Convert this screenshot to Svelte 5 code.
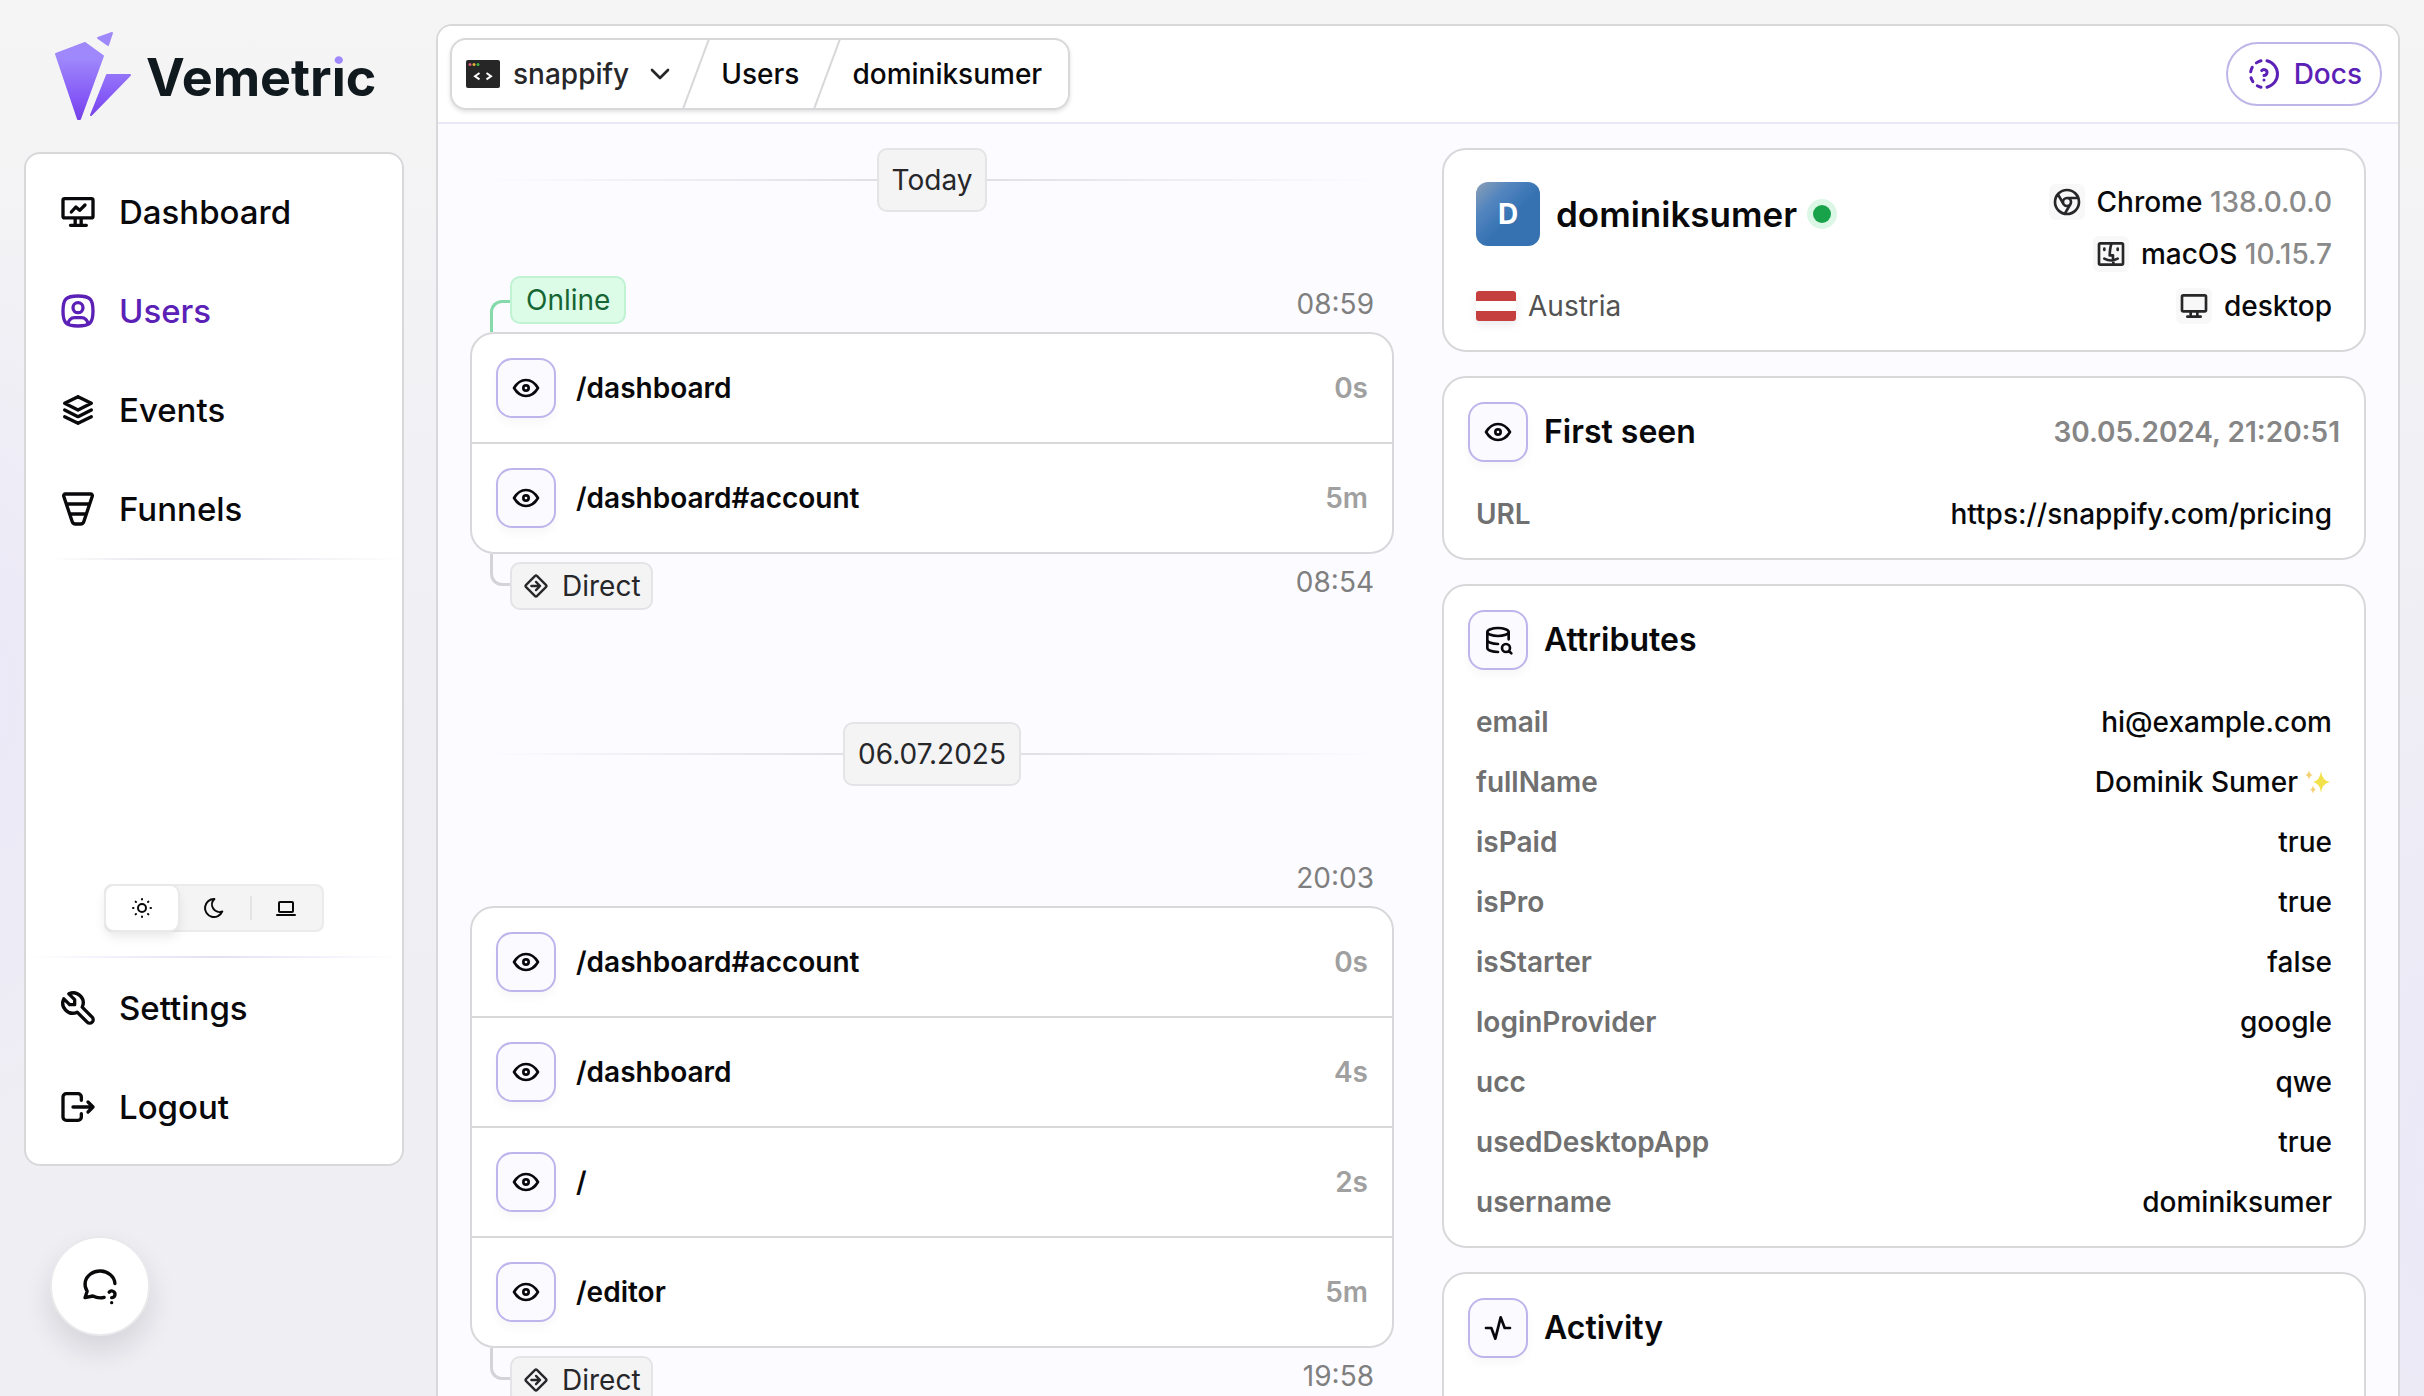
<script lang="ts">
  const icons: Record<string, string> = {
    dashboard:
      'M3 5a1 1 0 0 1 1-1h16a1 1 0 0 1 1 1v9.500a1 1 0 0 1-1 1h-16a1 1 0 0 1-1-1zM7.500 20h9.500M10.300 15.500v4.500M13.900 15.500v4.500M8 12l2.700-3 2.300 2 3.200-3.200',
    users:
      'M9 10a3 3 0 1 0 6 0a3 3 0 1 0-6 0M6 20.050v-.050a4 4 0 0 1 4-4h4a4 4 0 0 1 4 4v.050M12 3c7.200 0 9 1.800 9 9s-1.800 9-9 9s-9-1.800-9-9s1.800-9 9-9',
    events: 'M12 4l-8 4l8 4l8-4l-8-4M4 12l8 4l8-4M4 16l8 4l8-4',
    funnels:
      'M4.387 3h15.226a1 1 0 0 1 .948 1.316l-5.105 15.316a2 2 0 0 1-1.898 1.368h-3.116a2 2 0 0 1-1.898-1.368l-5.104-15.316a1 1 0 0 1 .947-1.316M5 9h14M7 15h10',
    settings: 'M7 10h3v-3l-3.500-3.500a6 6 0 0 1 8 8l6 6a2 2 0 0 1-3 3l-6-6a6 6 0 0 1-8-8l3.500 3.500',
    logout:
      'M14 8v-2a2 2 0 0 0-2-2h-7a2 2 0 0 0-2 2v12a2 2 0 0 0 2 2h7a2 2 0 0 0 2-2v-2M9 12h12l-3-3M18 15l3-3',
    sun: 'M8 12a4 4 0 1 0 8 0a4 4 0 1 0-8 0M3 12h.500M12 3v.500M20.500 12h.500M12 20.500v.500M5.600 5.600l.400.400M18.400 5.600l-.400.400M18 18l.400.400M6 18l-.400.400',
    moon: 'M12 3c.132 0 .263 0 .393 0a7.500 7.500 0 0 0 7.920 12.446a9 9 0 1 1-8.313-12.454z',
    laptop: 'M3 19h18M5 7a1 1 0 0 1 1-1h12a1 1 0 0 1 1 1v8a1 1 0 0 1-1 1h-12a1 1 0 0 1-1-1z',
    eye: 'M10 12a2 2 0 1 0 4 0a2 2 0 0 0-4 0M21 12c-2.400 4-5.400 6-9 6s-6.600-2-9-6c2.400-4 5.400-6 9-6s6.600 2 9 6',
    attributes:
      'M4 6c0 1.657 3.582 3 8 3s8-1.343 8-3s-3.582-3-8-3s-8 1.343-8 3M4 6v6c0 1.657 3.582 3 8 3M20 11.500v-5.500M4 12v6c0 1.657 3.582 3 8 3M15 18a3 3 0 1 0 6 0a3 3 0 1 0-6 0M20.200 20.200l1.800 1.800',
    activity: 'M3 12h4l3 8l4-16l3 8h4',
    direct:
      'M3.320 12.774l7.906 7.905c.427.428 1.120.428 1.548 0l7.905-7.905a1.095 1.095 0 0 0 0-1.548l-7.905-7.905a1.095 1.095 0 0 0-1.548 0l-7.905 7.905a1.095 1.095 0 0 0 0 1.548zM8 12h7.500M12 8.500l3.500 3.500l-3.500 3.500',
    docs: 'M12 16v.010M12 13a2 2 0 0 0 .914-3.782a1.980 1.980 0 0 0-2.414.483M10 20.777a8.942 8.942 0 0 1-2.480-.969M14 3.223a9.003 9.003 0 0 1 0 17.554M4.579 17.093a8.961 8.961 0 0 1-1.227-2.592M3.124 10.500c.160-.950.468-1.850.900-2.675l.169-.305M6.907 4.579a8.954 8.954 0 0 1 3.093-1.356',
    chrome:
      'M3 12a9 9 0 1 0 18 0a9 9 0 1 0-18 0M9 12a3 3 0 1 0 6 0a3 3 0 1 0-6 0M12 9h8.400M14.598 13.500l-4.200 7.275M9.402 13.500l-4.200-7.275',
    finder:
      'M3 5a1 1 0 0 1 1-1h16a1 1 0 0 1 1 1v14a1 1 0 0 1-1 1h-16a1 1 0 0 1-1-1zM7 8v1M17 8v1M12.500 4c-.654 1.486-1.260 3.443-1.500 9h2.500c-.190 2.867.094 5.024.500 7M7 15.500c3.667 2 6.333 2 10 0',
    desktop:
      'M3 5a1 1 0 0 1 1-1h16a1 1 0 0 1 1 1v10a1 1 0 0 1-1 1h-16a1 1 0 0 1-1-1zM7 20h10M9.500 16v4M14.500 16v4',
    help: 'M14.500 18.883a9.700 9.700 0 0 1-6.800-.883l-4.700 1l1.300-3.900c-2.324-3.437-1.426-7.872 2.100-10.374c3.526-2.501 8.590-2.296 11.845.480c1.700 1.450 2.600 3.350 2.700 5.300M19 22v.010M19 19a2.003 2.003 0 0 0 .914-3.782a1.980 1.980 0 0 0-2.414.483',
    chevron: 'M6 9l6 6l6-6'
  };

  const mainNav = [
    { label: 'Dashboard', icon: 'dashboard', active: false },
    { label: 'Users', icon: 'users', active: true },
    { label: 'Events', icon: 'events', active: false },
    { label: 'Funnels', icon: 'funnels', active: false }
  ];

  let theme = $state('Light');
  const themes = [
    { name: 'Light', icon: 'sun' },
    { name: 'Dark', icon: 'moon' },
    { name: 'System', icon: 'laptop' }
  ];

  const days = [
    {
      label: 'Today',
      online: true,
      end: '08:59',
      start: '08:54',
      events: [
        ['/dashboard', '0s'],
        ['/dashboard#account', '5m']
      ]
    },
    {
      label: '06.07.2025',
      online: false,
      end: '20:03',
      start: '19:58',
      events: [
        ['/dashboard#account', '0s'],
        ['/dashboard', '4s'],
        ['/', '2s'],
        ['/editor', '5m']
      ]
    }
  ];

  const devices = [
    { icon: 'chrome', name: 'Chrome', version: '138.0.0.0' },
    { icon: 'finder', name: 'macOS', version: '10.15.7' },
    { icon: 'desktop', name: 'desktop', version: '' }
  ];

  const attributes = [
    ['email', 'hi@example.com'],
    ['fullName', 'Dominik Sumer'],
    ['isPaid', 'true'],
    ['isPro', 'true'],
    ['isStarter', 'false'],
    ['loginProvider', 'google'],
    ['ucc', 'qwe'],
    ['usedDesktopApp', 'true'],
    ['username', 'dominiksumer']
  ];
</script>

{#snippet icon(name: string, size: number)}
  <svg class="icon" width={size} height={size} viewBox="0 0 24 24" aria-hidden="true">
    <path d={icons[name]} />
  </svg>
{/snippet}

<div class="app">
  <aside class="sidebar">
    <a class="brand" href="#home" aria-label="Vemetric">
      <svg class="mark" width="78" height="90" viewBox="0 0 78 90" aria-hidden="true">
        <defs>
          <linearGradient id="mark-fill" gradientUnits="userSpaceOnUse" x1="0" y1="0" x2="0" y2="90">
            <stop offset="0.3" stop-color="#9f88fb" />
            <stop offset="0.75" stop-color="#8458f6" />
            <stop offset="1" stop-color="#7440e6" />
          </linearGradient>
        </defs>
        <g fill="url(#mark-fill)" stroke="url(#mark-fill)" stroke-width="2" stroke-linejoin="round">
          <path d="M2 23L31 12L49 25L26 88H24Z" />
          <path d="M44 7L58 2L54 14Z" />
          <path d="M53 44H76L37 84Z" />
        </g>
      </svg>
      <span class="wordmark">Vemetr<span class="dotted">i</span>c</span>
    </a>

    <nav class="side-card" aria-label="Main">
      {#each mainNav as item}
        <a class="nav-item" class:active={item.active} href="#{item.label.toLowerCase()}">
          {@render icon(item.icon, 40)}
          {item.label}
        </a>
      {/each}
      <div class="rule left"></div>
      <div class="spacer"></div>
      <div class="themes" role="group" aria-label="Theme">
        {#each themes as t}
          <button
            class="theme"
            class:selected={theme === t.name}
            aria-label={t.name}
            aria-pressed={theme === t.name}
            onclick={() => (theme = t.name)}
          >
            {@render icon(t.icon, 24)}
          </button>
        {/each}
      </div>
      <div class="rule"></div>
      <a class="nav-item" href="#settings">{@render icon('settings', 40)}Settings</a>
      <a class="nav-item" href="#logout">{@render icon('logout', 40)}Logout</a>
    </nav>
  </aside>

  <button class="help" aria-label="Help">{@render icon('help', 40)}</button>

  <main class="panel">
    <header class="topbar">
      <nav class="crumbs" aria-label="Breadcrumb">
        <button class="project">
          <svg width="34" height="28" viewBox="0 0 34 28" aria-hidden="true">
            <rect width="34" height="28" rx="2" fill="#262626" />
            <circle cx="4" cy="4.500" r="1.500" fill="#e0567a" />
            <circle cx="8" cy="4.500" r="1.500" fill="#e2b33c" />
            <circle cx="12" cy="4.500" r="1.500" fill="#3fae49" />
            <path
              d="M13.500 13l-4.500 3.200l4.500 3.200M20.500 13l4.500 3.200l-4.500 3.200"
              fill="none"
              stroke="#fff"
              stroke-width="2"
            />
          </svg>
          <span class="project-name">snappify</span>
          {@render icon('chevron', 32)}
        </button>
        <svg class="slash" width="28" height="68" viewBox="0 0 28 68" aria-hidden="true">
          <path d="M27 -1L1 69" />
        </svg>
        <a href="#users">Users</a>
        <svg class="slash" width="28" height="68" viewBox="0 0 28 68" aria-hidden="true">
          <path d="M27 -1L1 69" />
        </svg>
        <a class="current" href="#dominiksumer" aria-current="page">dominiksumer</a>
      </nav>
      <a class="docs" href="#docs">{@render icon('docs', 36)}Docs</a>
    </header>

    <div class="content">
      <section class="timeline" aria-label="Sessions">
        {#each days as day}
          <div class="day">
            <h2 class="day-label"><span>{day.label}</span></h2>
            <div class="session-head">
              {#if day.online}
                <span class="connector top"></span>
                <span class="badge online">Online</span>
              {/if}
              <time>{day.end}</time>
            </div>
            <ul class="events">
              {#each day.events as [path, duration]}
                <li>
                  <span class="icon-box">{@render icon('eye', 32)}</span>
                  <span class="path">{path}</span>
                  <span class="duration">{duration}</span>
                </li>
              {/each}
            </ul>
            <div class="session-foot">
              <span class="connector bottom"></span>
              <span class="badge">{@render icon('direct', 28)}Direct</span>
              <time>{day.start}</time>
            </div>
          </div>
        {/each}
      </section>

      <section class="details" aria-label="User details">
        <article class="card profile">
          <div class="identity">
            <div class="who">
              <span class="avatar">D</span>
              <h1>dominiksumer</h1>
              <span class="status" role="img" aria-label="Online now"></span>
            </div>
            <div class="country">
              <svg class="flag" width="40" height="30" viewBox="0 0 40 30" aria-hidden="true">
                <rect width="40" height="30" rx="3" fill="#c53f3f" />
                <rect y="10" width="40" height="10" fill="#fff" />
              </svg>
              Austria
            </div>
          </div>
          <ul class="devices">
            {#each devices as device}
              <li>
                <span class="device-icon">{@render icon(device.icon, 32)}</span>
                <span>{device.name} {#if device.version}<span class="version">{device.version}</span>{/if}</span>
              </li>
            {/each}
          </ul>
        </article>

        <article class="card">
          <div class="card-head">
            <span class="icon-box">{@render icon('eye', 32)}</span>
            <h2>First seen</h2>
            <time class="seen">30.05.2024, 21:20:51</time>
          </div>
          <dl>
            <div class="pair"><dt>URL</dt><dd class="url">https://snappify.com/pricing</dd></div>
          </dl>
        </article>

        <article class="card">
          <div class="card-head">
            <span class="icon-box">{@render icon('attributes', 32)}</span>
            <h2>Attributes</h2>
          </div>
          <dl>
            {#each attributes as [key, value]}
              <div class="pair">
                <dt>{key}</dt>
                <dd>
                  {value}
                  {#if key === 'fullName'}
                    <svg width="28" height="28" viewBox="0 0 28 28" role="img" aria-label="sparkles">
                      <path
                        d="M17 3Q18 12.500 26 14Q18 15.500 17 25Q16 15.500 9 14Q16 12.500 17 3Z"
                        fill="#f2e14b"
                      />
                      <path
                        d="M5 2Q5.500 6.500 9 7Q5.500 7.500 5 12Q4.500 7.500 1 7Q4.500 6.500 5 2ZM9 17Q9.500 21 12 21.500Q9.500 22 9 26Q8.500 22 6 21.500Q8.500 21 9 17Z"
                        fill="#f3cf72"
                      />
                    </svg>
                  {/if}
                </dd>
              </div>
            {/each}
          </dl>
        </article>

        <article class="card">
          <div class="card-head">
            <span class="icon-box">{@render icon('activity', 32)}</span>
            <h2>Activity</h2>
          </div>
          <div class="chart"></div>
        </article>
      </section>
    </div>
  </main>
</div>

<style>
  :global(body) {
    margin: 0;
  }

  .app {
    box-sizing: border-box;
    display: grid;
    grid-template-columns: 380px minmax(0, 1fr);
    column-gap: 32px;
    height: 100vh;
    padding: 24px 24px 0;
    overflow: hidden;
    font-family: Inter, 'Noto Sans', sans-serif;
    font-size: 28px;
    line-height: 40px;
    font-weight: 500;
    color: #09090b;
    background:
      radial-gradient(ellipse 120px 480px at 0 50%, rgba(232, 228, 250, 0.6), transparent),
      radial-gradient(ellipse 160px 620px at 100% 84%, rgba(232, 228, 250, 0.6), transparent),
      linear-gradient(#f5f5f5, #f0eff4 44%, #efeef3);
  }

  .app *,
  .app *::before {
    box-sizing: border-box;
  }

  a {
    color: inherit;
    text-decoration: none;
  }

  button {
    padding: 0;
    border: 0;
    font: inherit;
    color: inherit;
    background: none;
    cursor: pointer;
  }

  h1,
  h2,
  ul,
  dl,
  dd {
    margin: 0;
    padding: 0;
  }

  ul {
    list-style: none;
  }

  .icon {
    flex: none;
    display: block;
    fill: none;
    stroke: currentColor;
    stroke-width: 2;
    stroke-linecap: round;
    stroke-linejoin: round;
  }

  /* Sidebar */
  .sidebar {
    display: flex;
    flex-direction: column;
    min-height: 0;
    padding-bottom: 230px;
  }

  .brand {
    display: flex;
    align-items: center;
    gap: 14px;
    height: 104px;
    margin: 0 0 24px 30px;
  }

  .mark {
    flex: none;
  }

  .wordmark {
    padding-top: 4px;
    font-size: 52px;
    line-height: 64px;
    font-weight: 700;
    color: #10191d;
  }

  .dotted {
    color: transparent;
    background: linear-gradient(#9f88fb 22px, #10191d 22px);
    background-clip: text;
    -webkit-background-clip: text;
  }

  .side-card {
    flex: 1;
    display: flex;
    flex-direction: column;
    padding: 8px 0;
    border: 2px solid #d8d8db;
    border-radius: 16px;
    background: #fff;
  }

  .nav-item {
    flex: none;
    display: flex;
    align-items: center;
    gap: 21px;
    height: 99px;
    padding-left: 32px;
    font-size: 33px;
  }

  .nav-item.active {
    color: #5b21b6;
  }

  .rule {
    flex: none;
    height: 2px;
    background: linear-gradient(90deg, transparent, #e3e0f6 50%, transparent);
  }

  .rule.left {
    margin-left: 24px;
    background: linear-gradient(90deg, transparent, #ebeaf0 25%, #ebeaf0 60%, transparent);
  }

  .spacer {
    flex: 1;
  }

  .themes {
    display: flex;
    align-self: center;
    margin-bottom: 24px;
    border: 2px solid #ebebed;
    border-radius: 8px;
    background: #f4f4f5;
  }

  .theme {
    position: relative;
    display: grid;
    place-items: center;
    width: 72px;
    height: 44px;
    border-radius: 8px;
  }

  .theme:last-child::before {
    content: '';
    position: absolute;
    left: 0;
    top: 10px;
    bottom: 10px;
    width: 2px;
    background: #e4e4e7;
  }

  .theme.selected {
    background: #fff;
    box-shadow:
      0 0 0 2px #e9e9eb,
      0 6px 12px rgba(0, 0, 0, 0.1);
  }

  .help {
    position: fixed;
    left: 50px;
    bottom: 60px;
    display: grid;
    place-items: center;
    width: 100px;
    height: 100px;
    border: 2px solid #e9e9ec;
    border-radius: 50%;
    background: #fff;
    box-shadow: 0 14px 28px rgba(24, 24, 40, 0.12);
  }

  /* Main panel */
  .panel {
    display: flex;
    flex-direction: column;
    min-width: 0;
    min-height: 0;
    border: 2px solid #d8d8db;
    border-bottom: 0;
    border-radius: 16px 16px 0 0;
    background: #fcfbff;
    overflow: hidden;
  }

  .topbar {
    flex: none;
    display: flex;
    align-items: center;
    justify-content: space-between;
    padding: 12px 16px 12px 12px;
    border-bottom: 2px solid #e9e8f8;
    background: #fff;
  }

  .crumbs {
    display: flex;
    align-items: center;
    border: 2px solid #d8d8db;
    border-radius: 16px;
    box-shadow: 0 2px 4px rgba(0, 0, 0, 0.12);
  }

  .crumbs a {
    padding: 0 14px 0 11px;
  }

  .crumbs a.current {
    padding-right: 26px;
  }

  .project {
    display: flex;
    align-items: center;
    padding: 0 6px 0 14px;
    color: #27272a;
  }

  .project-name {
    margin: 0 15px 0 13px;
  }

  .slash {
    flex: none;
    fill: none;
    stroke: #d8d8db;
    stroke-width: 2;
  }

  .docs {
    display: flex;
    align-items: center;
    gap: 12px;
    height: 64px;
    padding: 0 18px;
    border: 2px solid #beb5e8;
    border-radius: 32px;
    color: #5b21b6;
  }

  .content {
    flex: 1;
    display: grid;
    grid-template-columns: minmax(0, 1fr) minmax(0, 1fr);
    align-items: start;
    gap: 48px;
    min-height: 0;
    padding: 24px 32px;
  }

  /* Timeline */
  .day {
    margin-bottom: 112px;
  }

  .day-label {
    display: flex;
    align-items: center;
    padding: 0 16px;
    font-size: 28px;
    font-weight: 400;
    color: #27272a;
  }

  .day-label::before,
  .day-label::after {
    content: '';
    flex: 1;
    height: 2px;
    background: linear-gradient(90deg, transparent, #e0e0e6);
  }

  .day-label::after {
    background: linear-gradient(270deg, transparent, #e0e0e6);
  }

  .day-label span {
    padding: 10px 13px;
    border: 2px solid #e4e4e7;
    border-radius: 10px;
    background: #f4f4f5;
  }

  .session-head,
  .session-foot {
    display: flex;
    height: 56px;
    padding: 0 20px;
    font-weight: 400;
  }

  .session-head {
    margin-top: 64px;
  }

  .session-head time,
  .session-foot time {
    align-self: center;
    margin-left: auto;
    color: #7f7f7f;
  }

  .session-head .badge {
    align-self: flex-start;
  }

  .session-foot .badge {
    align-self: flex-end;
  }

  .connector {
    width: 20px;
    height: 32px;
    border: 0 solid #d4d4d8;
  }

  .connector.top {
    align-self: flex-end;
    border-color: #86d9a9;
    border-width: 3px 0 0 3px;
    border-top-left-radius: 12px;
  }

  .connector.bottom {
    border-width: 0 0 3px 3px;
    border-bottom-left-radius: 12px;
  }

  .badge {
    display: flex;
    align-items: center;
    gap: 12px;
    height: 48px;
    padding: 0 10px;
    border: 2px solid #e4e4e7;
    border-radius: 10px;
    color: #27272a;
    background: #f4f4f5;
  }

  .badge.online {
    padding: 0 14px;
    border-color: #bff3d2;
    color: #166534;
    background: #dcfce7;
  }

  .events {
    border: 2px solid #d8d8db;
    border-radius: 24px;
    background: #fff;
  }

  .events li {
    display: flex;
    align-items: center;
    gap: 20px;
    padding: 24px;
  }

  .events li + li {
    border-top: 2px solid #d8d8db;
  }

  .path {
    font-weight: 600;
  }

  .duration {
    margin-left: auto;
    font-weight: 600;
    color: #a0a0a0;
  }

  .icon-box {
    flex: none;
    display: grid;
    place-items: center;
    width: 60px;
    height: 60px;
    border: 2px solid #beb5ec;
    border-radius: 16px;
    background: #fafaff;
    box-shadow: 0 6px 8px rgba(0, 0, 0, 0.03);
  }

  /* Detail cards */
  .details {
    display: flex;
    flex-direction: column;
    gap: 24px;
  }

  .card {
    padding: 24px 24px 14px;
    border: 2px solid #d8d8db;
    border-radius: 24px;
    background: #fff;
  }

  .card.profile {
    display: flex;
    justify-content: space-between;
    padding: 32px 32px 24px;
  }

  .identity {
    display: flex;
    flex-direction: column;
    justify-content: space-between;
  }

  .who {
    display: flex;
    align-items: center;
    gap: 16px;
  }

  .avatar {
    display: grid;
    place-items: center;
    width: 64px;
    height: 64px;
    border-radius: 12px;
    font-weight: 700;
    color: #fff;
    background: linear-gradient(135deg, #8ba0b5, #5285bf 28%, #3672b2 55%);
  }

  h1 {
    font-size: 35px;
    font-weight: 600;
  }

  .status {
    width: 18px;
    height: 18px;
    border-radius: 50%;
    background: #18a34b;
    box-shadow: 0 0 0 6px #dcf7e6;
  }

  .country {
    display: flex;
    align-items: center;
    gap: 12px;
    font-weight: 400;
    color: #525252;
  }

  .flag {
    flex: none;
    filter: drop-shadow(0 4px 4px rgba(0, 0, 0, 0.08));
  }

  .devices {
    display: flex;
    flex-direction: column;
    align-items: flex-end;
    gap: 12px;
  }

  .devices li {
    display: flex;
    align-items: center;
    gap: 12px;
  }

  .device-icon {
    display: grid;
    place-items: center;
    width: 36px;
    height: 36px;
    border-radius: 6px;
    color: #27272a;
    background: #f8f8f8;
  }

  .version {
    color: #8a8a8a;
  }

  .card-head {
    display: flex;
    align-items: center;
    gap: 16px;
    margin-bottom: 22px;
  }

  .card-head h2 {
    font-size: 32px;
    font-weight: 600;
  }

  .seen {
    margin-left: auto;
    font-weight: 600;
    color: #868686;
  }

  .pair {
    display: flex;
    justify-content: space-between;
    padding: 10px 8px;
  }

  dt {
    font-weight: 600;
    color: #707070;
  }

  dd {
    display: flex;
    align-items: center;
    gap: 6px;
  }

  .chart {
    height: 240px;
  }
</style>
